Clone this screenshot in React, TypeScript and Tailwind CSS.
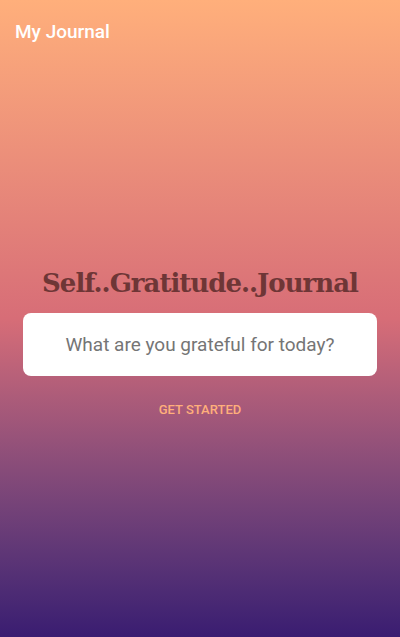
import React, { useState } from 'react';

export default function App() {
  const [entry, setEntry] = useState('');

  return (
    <div
      className="flex min-h-[637px] w-full flex-col bg-gradient-to-b from-[#ffaf7b] via-[#d76d77] to-[#3a1c71]"
      style={{ fontFamily: 'Roboto, "Noto Sans", sans-serif' }}
    >
      {/* Header */}
      <header className="flex h-16 items-center px-[15px]">
        <h1 className="text-[19px] font-medium text-white">My Journal</h1>
      </header>

      <main className="flex flex-1 flex-col items-center justify-center px-[23px] pb-2">
        <h2
          className="mb-3 text-[26px] font-bold leading-9 tracking-[-1px] text-[#6e3636]"
          style={{ fontFamily: '"Roboto Slab", "DejaVu Serif", serif' }}
        >
          Self..Gratitude..Journal
        </h2>
        <input
          value={entry}
          onChange={e => setEntry(e.target.value)}
          placeholder="What are you grateful for today?"
          className="h-[63px] w-full rounded-lg bg-white px-4 text-center text-[19px] text-[#333] placeholder-[#757575] outline-none"
        />
        <button
          type="button"
          className="mt-4 h-9 px-4 text-[13px] font-medium uppercase text-[#ffaf7b]"
        >
          Get Started
        </button>
      </main>
    </div>
  );
}
